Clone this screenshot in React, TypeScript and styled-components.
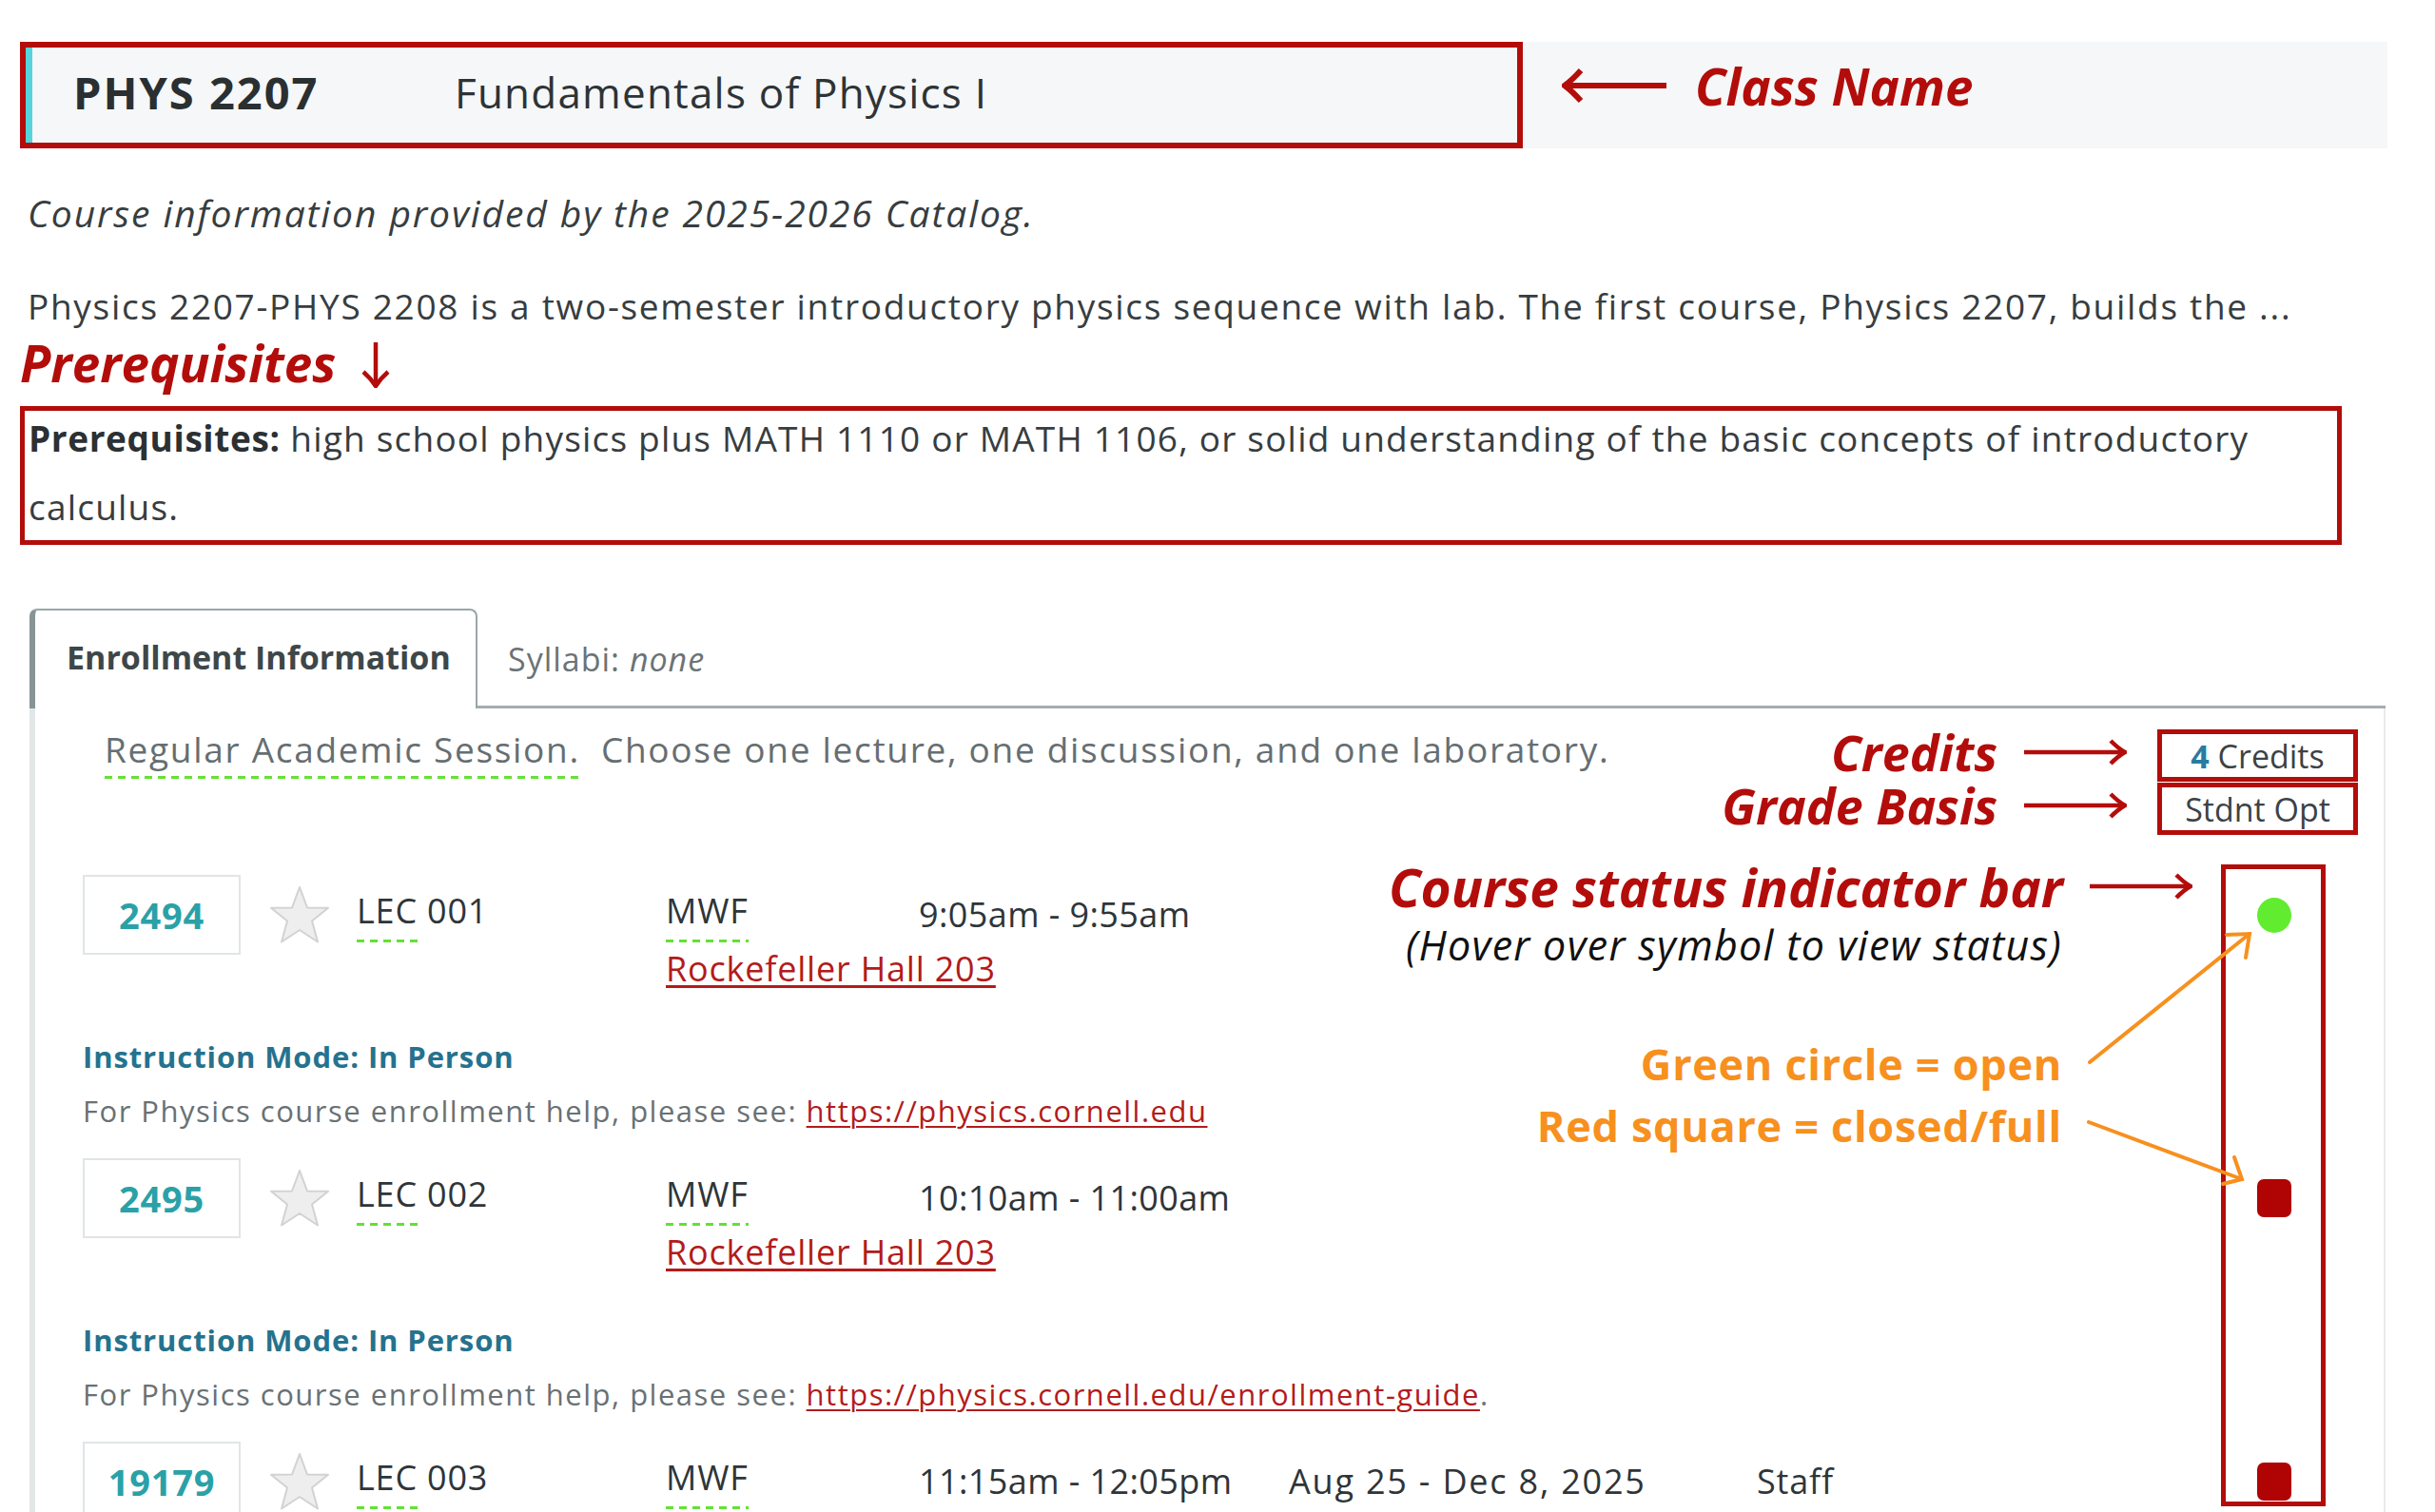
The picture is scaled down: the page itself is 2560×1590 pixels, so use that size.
import React from "react";
import styled, { createGlobalStyle } from "styled-components";

const RED = "#b30d0b";
const ORANGE = "#f7901e";
const TEAL = "#2aa1a7";
const GREEN_DASH = "#63e134";

const GlobalStyle = createGlobalStyle`
  html, body { margin: 0; padding: 0; background: #ffffff; }
  body {
    font-family: "Open Sans", Lato, sans-serif;
    color: #363c3f;
    width: 2560px;
    height: 1590px;
    overflow: hidden;
  }
  * { box-sizing: border-box; }
`;

const Page = styled.div`
  padding: 44px 50px 0 21px;
  height: 1590px;
  overflow: hidden;
`;

/* ---------- header ---------- */
const HeaderBar = styled.div`
  display: flex;
  align-items: center;
  width: 2489px;
  height: 112px;
  background: #f5f7f8;
`;

const TitleBox = styled.div`
  display: flex;
  align-items: center;
  width: 1580px;
  height: 112px;
  padding-bottom: 6px;
  border: 6px solid ${RED};
`;

const TealMark = styled.span`
  align-self: stretch;
  width: 7px;
  margin-bottom: -6px;
  background: #56d4d9;
`;

const CourseCode = styled.span`
  width: 401px;
  margin-left: 43px;
  font-size: 47px;
  font-weight: 700;
  letter-spacing: 2px;
  color: #2a2f31;
`;

const CourseTitle = styled.span`
  font-size: 44px;
  letter-spacing: 1.2px;
  color: #2e3336;
`;

const ClassNameNote = styled.div`
  display: flex;
  align-items: center;
  margin: 0 0 20px 41px;
  gap: 30px;
`;

const Callout = styled.span<{ $size?: number }>`
  font-size: ${(p) => p.$size ?? 52}px;
  font-weight: 700;
  font-style: italic;
  color: ${RED};
  line-height: 1;
  white-space: nowrap;
`;

/* ---------- catalog text ---------- */
const CatalogNote = styled.p`
  margin: 43px 0 0 8px;
  font-size: 39px;
  font-style: italic;
  line-height: 50px;
  letter-spacing: 1.9px;
  color: #373d40;
  white-space: nowrap;
`;

const Description = styled.p`
  margin: 48px 0 0 8px;
  font-size: 37px;
  line-height: 50px;
  letter-spacing: 1.7px;
  color: #373d40;
  white-space: nowrap;
`;

const PrereqNote = styled.div`
  display: flex;
  align-items: flex-start;
  height: 56px;
  margin-top: 7px;
  gap: 24px;
  line-height: 56px;
`;

const PrereqBox = styled.div`
  width: 2441px;
  height: 146px;
  margin-top: 17px;
  padding: 0 4px;
  border: 5px solid ${RED};
`;

const PrereqText = styled.p`
  margin: -7px 0 0;
  max-width: 2412px;
  font-size: 37px;
  line-height: 72px;
  letter-spacing: 1.2px;
  color: #373d40;
  strong { font-weight: 700; color: #2b3033; letter-spacing: 0.6px; }
`;

/* ---------- tabs ---------- */
const TabStrip = styled.div`
  display: flex;
  width: 2477px;
  height: 105px;
  margin: 67px 0 0 10px;
`;

const ActiveTab = styled.div`
  display: flex;
  align-items: center;
  width: 471px;
  padding: 0 0 6px 33px;
  background: #fff;
  border: 2px solid #9aa7a9;
  border-left: 6px solid #879496;
  border-bottom: none;
  border-radius: 8px 8px 0 0;
  font-size: 34px;
  font-weight: 700;
  color: #3d4749;
  white-space: nowrap;
`;

const TabRest = styled.div`
  flex: 1;
  display: flex;
  align-items: center;
  padding: 4px 0 0 32px;
  border-bottom: 3px solid #a3adb0;
  font-size: 34px;
  letter-spacing: 1px;
  color: #6b7376;
  em { font-style: italic; }
`;

const Panel = styled.div`
  width: 2477px;
  height: 900px;
  margin-left: 10px;
  padding-top: 18px;
  border-left: 6px solid #e2e6e7;
  border-right: 2px solid #e9ebec;
`;

/* ---------- session row ---------- */
const SessionRow = styled.div`
  display: flex;
  align-items: flex-start;
  height: 115px;
  padding: 0 27px 0 73px;
`;

const SessionText = styled.div`
  font-size: 37px;
  line-height: 50px;
  letter-spacing: 1.7px;
  color: #666e71;
  white-space: nowrap;
`;

const Dashed = styled.span<{ $gap?: number }>`
  display: inline-block;
  padding-bottom: ${(p) => p.$gap ?? 6}px;
  background-image: linear-gradient(to right, ${GREEN_DASH} 58%, transparent 58%);
  background-size: 14px 3px;
  background-repeat: repeat-x;
  background-position: left bottom;
  line-height: inherit;
`;

const SessionRest = styled.span`
  margin-left: 22px;
`;

const CreditNotes = styled.div`
  display: flex;
  flex-direction: column;
  gap: 1px;
  margin: 0 0 0 auto;
`;

const CreditNote = styled.div`
  display: flex;
  align-items: center;
  justify-content: flex-end;
  height: 55px;
  gap: 28px;
`;

const CreditBoxes = styled.div`
  display: flex;
  flex-direction: column;
  gap: 1px;
  margin: 4px 0 0 32px;
`;

const CreditBox = styled.div`
  display: flex;
  align-items: center;
  justify-content: center;
  width: 211px;
  height: 55px;
  border: 5px solid ${RED};
  font-size: 34px;
  color: #3c4245;
  white-space: nowrap;
  b { font-weight: 700; color: #2b7b9f; }
`;

/* ---------- sections ---------- */
const SectionList = styled.div`
  position: relative;
  margin-top: 42px;
  padding: 0 97px 0 50px;
`;

const Section = styled.div`
  & + & { margin-top: 30px; }
`;

const MainRow = styled.div`
  display: grid;
  grid-template-columns: 166px 122px 325px 266px 389px 492px 1fr 36px;
  align-items: center;
  height: 84px;
  font-size: 36px;
  letter-spacing: 0.8px;
  color: #2f3538;
  white-space: nowrap;
`;

const ClassNumber = styled.div`
  display: flex;
  align-items: center;
  justify-content: center;
  height: 84px;
  border: 2px solid #e1e5e7;
  font-size: 38px;
  font-weight: 700;
  color: ${TEAL};
`;

const StarCell = styled.div`
  display: flex;
  padding-left: 29px;
`;

const Cell = styled.div<{ $spacing?: number }>`
  line-height: 50px;
  letter-spacing: ${(p) => p.$spacing ?? 0.8}px;
`;

const GreenDot = styled.span`
  display: block;
  width: 36px;
  height: 37px;
  border-radius: 50%;
  background: #62ec2f;
`;

const RedSquare = styled.span`
  display: block;
  width: 36px;
  height: 40px;
  border-radius: 7px;
  background: #b00303;
`;

const LocationRow = styled.div`
  height: 30px;
  margin-left: 613px;
  line-height: 30px;
`;

const RedLink = styled.a`
  font-size: 36px;
  letter-spacing: 0.8px;
  color: #b31b1b;
  text-decoration: underline;
  text-decoration-thickness: 3px;
  text-underline-offset: 4px;
  white-space: nowrap;
`;

const InstructionMode = styled.div`
  margin-top: 57px;
  font-size: 31px;
  font-weight: 700;
  line-height: 40px;
  letter-spacing: 0.9px;
  color: #25728e;
`;

const HelpLine = styled.div`
  margin-top: 17px;
  font-size: 31px;
  line-height: 40px;
  letter-spacing: 1.5px;
  color: #697174;
  white-space: nowrap;
  a { font-size: 31px; letter-spacing: 1.5px; text-decoration-thickness: 2px; }
`;

/* ---------- status callout overlay ---------- */
const StatusCallout = styled.div`
  position: absolute;
  top: -11px;
  right: 61px;
  display: flex;
  width: 1005px;
  height: 675px;
`;

const CalloutTexts = styled.div`
  flex: 1;
  display: flex;
  flex-direction: column;
  align-items: flex-end;
  padding-right: 30px;
`;

const CalloutLine = styled.div`
  display: flex;
  align-items: center;
  gap: 28px;
  height: 46px;
`;

const HoverHint = styled.div`
  margin: 16px 137px 0 0;
  font-size: 43px;
  font-style: italic;
  line-height: 46px;
  letter-spacing: 1.3px;
  color: #111;
  white-space: nowrap;
`;

const Legend = styled.div<{ $top: number }>`
  margin: ${(p) => p.$top}px 137px 0 0;
  font-size: 45px;
  font-weight: 700;
  line-height: 50px;
  letter-spacing: 0.7px;
  color: ${ORANGE};
  white-space: nowrap;
`;

const StatusFrame = styled.div`
  width: 110px;
  height: 100%;
  border: 5px solid ${RED};
`;

const ArrowLayer = styled.svg`
  position: absolute;
  left: 0;
  top: 0;
  pointer-events: none;
`;

/* ---------- drawings ---------- */
function RightArrow({ width = 108 }: { width?: number }) {
  return (
    <svg width={width} height={28} viewBox={`0 0 ${width} 28`} fill="none" stroke={RED} strokeWidth={4.5} style={{ flex: "none" }}>
      <path d={`M0 14H${width - 3}`} />
      <path d={`M${width - 17} 2Q${width - 9} 10 ${width - 2} 14Q${width - 9} 18 ${width - 17} 26`} />
    </svg>
  );
}

function LeftArrow() {
  return (
    <svg width={110} height={36} viewBox="0 0 110 36" fill="none" stroke={RED} strokeWidth={6} style={{ flex: "none" }}>
      <path d="M5 18H110" />
      <path d="M20 2Q11 12 3 18Q11 24 20 34" />
    </svg>
  );
}

function DownArrow() {
  return (
    <svg width={36} height={48} viewBox="0 0 36 48" fill="none" stroke={RED} strokeWidth={4.5} style={{ flex: "none", marginTop: 6 }}>
      <path d="M18 0V45" />
      <path d="M5 31Q13 38 18 46Q23 38 31 31" />
    </svg>
  );
}

function Star() {
  return (
    <svg width={66} height={62} viewBox="0 0 66 62">
      <polygon
        points="33,2 41,23.5 63,23.8 46,37.5 52,59.5 33,47 14,59.5 20,37.5 3,23.8 25,23.5"
        fill="#eeeeee"
        stroke="#d2d2d2"
        strokeWidth={2}
        strokeLinejoin="round"
      />
    </svg>
  );
}

type SectionData = {
  id: string;
  lec: string;
  time: string;
  dates?: string;
  staff?: string;
  open: boolean;
  help?: string;
  helpTail?: string;
  room?: string;
};

const sections: SectionData[] = [
  { id: "2494", lec: "001", time: "9:05am - 9:55am", open: true, room: "Rockefeller Hall 203", help: "https://physics.cornell.edu" },
  { id: "2495", lec: "002", time: "10:10am - 11:00am", open: false, room: "Rockefeller Hall 203", help: "https://physics.cornell.edu/enrollment-guide", helpTail: "." },
  { id: "19179", lec: "003", time: "11:15am - 12:05pm", dates: "Aug 25 - Dec 8, 2025", staff: "Staff", open: false },
];

function SectionBlock({ s }: { s: SectionData }) {
  return (
    <Section>
      <MainRow>
        <ClassNumber>{s.id}</ClassNumber>
        <StarCell>
          <Star />
        </StarCell>
        <Cell>
          <Dashed $gap={8}>LEC</Dashed> {s.lec}
        </Cell>
        <Cell>
          <Dashed $gap={8}>MWF</Dashed>
        </Cell>
        <Cell $spacing={0.4}>{s.time}</Cell>
        <Cell $spacing={1.8}>{s.dates ?? ""}</Cell>
        <Cell>{s.staff ?? ""}</Cell>
        {s.open ? <GreenDot /> : <RedSquare />}
      </MainRow>
      {s.room && (
        <LocationRow>
          <RedLink href="#">{s.room}</RedLink>
        </LocationRow>
      )}
      {s.help && (
        <>
          <InstructionMode>Instruction Mode: In Person</InstructionMode>
          <HelpLine>
            For Physics course enrollment help, please see: <RedLink href="#">{s.help}</RedLink>
            {s.helpTail}
          </HelpLine>
        </>
      )}
    </Section>
  );
}

export default function App() {
  return (
    <>
      <GlobalStyle />
      <Page>
        <HeaderBar>
          <TitleBox>
            <TealMark />
            <CourseCode>PHYS 2207</CourseCode>
            <CourseTitle>Fundamentals of Physics I</CourseTitle>
          </TitleBox>
          <ClassNameNote>
            <LeftArrow />
            <Callout $size={53}>Class Name</Callout>
          </ClassNameNote>
        </HeaderBar>

        <CatalogNote>Course information provided by the 2025-2026 Catalog.</CatalogNote>
        <Description>
          Physics 2207-PHYS 2208 is a two-semester introductory physics sequence with lab. The first course, Physics 2207, builds the ...
        </Description>

        <PrereqNote>
          <Callout $size={53} style={{ lineHeight: "56px" }}>Prerequisites</Callout>
          <DownArrow />
        </PrereqNote>
        <PrereqBox>
          <PrereqText>
            <strong>Prerequisites:</strong> high school physics plus MATH 1110 or MATH 1106, or solid understanding of the basic concepts of introductory calculus.
          </PrereqText>
        </PrereqBox>

        <TabStrip>
          <ActiveTab>Enrollment Information</ActiveTab>
          <TabRest>
            Syllabi:&nbsp;<em>none</em>
          </TabRest>
        </TabStrip>

        <Panel>
          <SessionRow>
            <SessionText>
              <Dashed>Regular Academic Session.</Dashed>
              <SessionRest>Choose one lecture, one discussion, and one laboratory.</SessionRest>
            </SessionText>
            <CreditNotes>
              <CreditNote>
                <Callout>Credits</Callout>
                <RightArrow />
              </CreditNote>
              <CreditNote>
                <Callout>Grade Basis</Callout>
                <RightArrow />
              </CreditNote>
            </CreditNotes>
            <CreditBoxes>
              <CreditBox>
                <span>
                  <b>4</b> Credits
                </span>
              </CreditBox>
              <CreditBox>Stdnt Opt</CreditBox>
            </CreditBoxes>
          </SessionRow>

          <SectionList>
            {sections.map((s) => (
              <SectionBlock key={s.id} s={s} />
            ))}

            <StatusCallout>
              <CalloutTexts>
                <CalloutLine>
                  <Callout $size={55}>Course status indicator bar</Callout>
                  <RightArrow />
                </CalloutLine>
                <HoverHint>(Hover over symbol to view status)</HoverHint>
                <Legend $top={77}>Green circle = open</Legend>
                <Legend $top={15}>Red square = closed/full</Legend>
              </CalloutTexts>
              <StatusFrame />
              <ArrowLayer width={1005} height={675} viewBox="0 0 1005 675" fill="none" stroke={ORANGE} strokeWidth={4} strokeLinecap="round">
                <path d="M757 208L925 73" />
                <path d="M921 98L925 73L901 74" />
                <path d="M756 271L917 331" />
                <path d="M909 308L917 331L897 336" />
              </ArrowLayer>
            </StatusCallout>
          </SectionList>
        </Panel>
      </Page>
    </>
  );
}
